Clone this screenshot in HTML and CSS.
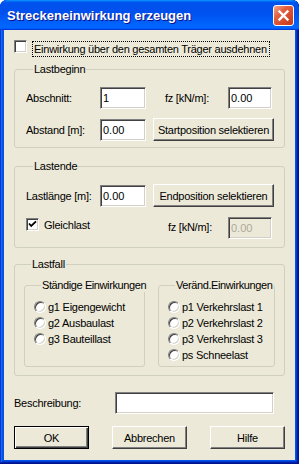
FILE: index.html
```html
<!DOCTYPE html>
<html lang="de">
<head>
    <meta charset="UTF-8">
    <title>Streckeneinwirkung erzeugen</title>
    <link rel="stylesheet" href="styles.css">
</head>
<body>
    <div class="window">
        <div class="titlebar">
            <span class="title">Streckeneinwirkung erzeugen</span>
            <span class="close">
                <svg width="19" height="19" viewBox="0 0 19 19">
                    <path d="M5.5 5.5 L13.5 13.5 M13.5 5.5 L5.5 13.5" stroke="#fff" stroke-width="2.4" stroke-linecap="square"/>
                </svg>
            </span>
        </div>

        <div class="client">
            <div class="check-row">
                <span class="check"></span>
                <span class="focus">Einwirkung über den gesamten Träger ausdehnen</span>
            </div>

            <fieldset class="group group-start">
                <legend>Lastbeginn</legend>
                <div class="row">
                    <span class="lbl">Abschnitt:</span>
                    <input class="edit" type="text" value="1">
                    <span class="lbl-fz">fz [kN/m]:</span>
                    <input class="edit edit-fz" type="text" value="0.00">
                </div>
                <div class="row row-btn">
                    <span class="lbl">Abstand [m]:</span>
                    <input class="edit" type="text" value="0.00">
                    <button class="btn btn-select" type="button">Startposition selektieren</button>
                </div>
            </fieldset>

            <fieldset class="group group-end">
                <legend>Lastende</legend>
                <div class="row row-first">
                    <span class="lbl">Lastlänge [m]:</span>
                    <input class="edit" type="text" value="0.00">
                    <button class="btn btn-select" type="button">Endposition selektieren</button>
                </div>
                <div class="row row-gleich">
                    <span class="gleich">
                        <span class="check">
                            <svg width="11" height="11" viewBox="0 0 11 11">
                                <path d="M2 4.5 L4.2 7 L9 2.3" stroke="#000" stroke-width="1.8" fill="none"/>
                            </svg>
                        </span>
                        <span>Gleichlast</span>
                    </span>
                    <span class="lbl-fz2">fz [kN/m]:</span>
                    <input class="edit edit-fz" type="text" value="0.00" disabled>
                </div>
            </fieldset>

            <fieldset class="group group-case">
                <legend>Lastfall</legend>
                <div class="cases">
                    <fieldset class="group sub sub-left">
                        <legend>Ständige Einwirkungen</legend>
                        <div class="radio"><span class="dot"></span>g1 Eigengewicht</div>
                        <div class="radio"><span class="dot"></span>g2 Ausbaulast</div>
                        <div class="radio"><span class="dot"></span>g3 Bauteillast</div>
                    </fieldset>
                    <fieldset class="group sub sub-right">
                        <legend>Veränd.Einwirkungen</legend>
                        <div class="radio"><span class="dot"></span>p1 Verkehrslast 1</div>
                        <div class="radio"><span class="dot"></span>p2 Verkehrslast 2</div>
                        <div class="radio"><span class="dot"></span>p3 Verkehrslast 3</div>
                        <div class="radio"><span class="dot"></span>ps Schneelast</div>
                    </fieldset>
                </div>
            </fieldset>

            <div class="desc-row">
                <span class="lbl-desc">Beschreibung:</span>
                <input class="edit edit-desc" type="text" value="">
            </div>

            <div class="button-row">
                <button class="btn btn-default" type="button">OK</button>
                <button class="btn" type="button">Abbrechen</button>
                <button class="btn" type="button">Hilfe</button>
            </div>
        </div>
    </div>
</body>
</html>
```

FILE: styles.css
```css
* {
    box-sizing: border-box;
}
body {
    margin: 0;
    background-color: #ffffff;
    font-family: "Liberation Sans", Arial, sans-serif;
    font-size: 11px;
    letter-spacing: -0.25px;
    color: #000;
}
.window {
    width: 299px;
    height: 464px;
    display: flex;
    flex-direction: column;
    background-color: #0055e5;
    border-radius: 7px 7px 0 0;
    overflow: hidden;
    box-shadow: inset -1px -1px #00138c, inset 1px 1px #0831d9, inset -2px -2px #001ea0, inset 2px 2px #166aee, inset -3px -3px #003bda, inset 3px 3px #0855dd;
}
.titlebar {
    height: 30px;
    flex: none;
    display: flex;
    justify-content: space-between;
    align-items: flex-start;
    padding: 0 5px 0 7px;
    background: linear-gradient(180deg, #0997ff, #0053ee 8%, #0050ee 40%, #0066ff 88%, #0066ff 93%, #005bff 95%, #003dd7 96%, #003dd7);
    border-radius: 7px 7px 0 0;
}
.title {
    margin-top: 8px;
    font-weight: bold;
    font-size: 13px;
    line-height: 16px;
    letter-spacing: 0;
    color: #fff;
    text-shadow: 1px 1px #0f1089;
}
.close {
    margin-top: 5px;
    width: 21px;
    height: 21px;
    border: 1px solid #fff;
    border-radius: 3px;
    background: linear-gradient(135deg, #f4a88f 0, #e2603f 35%, #d5482a 70%, #c23a1c 100%);
    display: flex;
}
.client {
    flex: 1;
    margin: 0 4px 4px;
    background-color: #ece9d8;
    padding: 10px 10px 0;
}

/* checkbox line at the top */
.check-row {
    display: flex;
    align-items: flex-start;
    height: 17px;
}
.check {
    width: 13px;
    height: 13px;
    flex: none;
    background-color: #fff;
    border: 1px solid;
    border-color: #808080 #fff #fff #808080;
    box-shadow: inset 1px 1px #404040, inset -1px -1px #d4d0c8;
    display: flex;
}
.focus {
    margin: 1px 0 0 5px;
    height: 16px;
    line-height: 14px;
    padding: 0 2px 0 1px;
    border: 1px dotted #000;
}

/* group boxes */
.group {
    margin: 0;
    padding: 0;
    min-width: 0;
    border: 1px solid #d0d0bf;
    border-radius: 3px;
}
.group legend {
    margin-left: 7px;
    padding: 0 1px;
    line-height: 13px;
    white-space: nowrap;
}
.group-start {
    margin-top: 6px;
    padding: 11px 0 6px 11px;
}
.group-end {
    margin-top: 12px;
    padding: 11px 0 8px 11px;
}
.group-case {
    margin-top: 10px;
    padding: 8px 0 8px 9px;
}
.row {
    display: flex;
    align-items: center;
    height: 22px;
}
.row-btn {
    margin-top: 9px;
    height: 23px;
}
.row-first {
    height: 23px;
}
.row-gleich {
    margin-top: 10px;
    align-items: flex-start;
}
.lbl {
    width: 74px;
    flex: none;
}
.lbl-fz {
    width: 82px;
    padding-left: 19px;
    flex: none;
}
.gleich {
    width: 142px;
    margin-top: 1px;
    display: flex;
    align-items: center;
    gap: 5px;
    flex: none;
}
.lbl-fz2 {
    width: 60px;
    margin-top: 4px;
    flex: none;
}
.edit {
    width: 46px;
    height: 22px;
    flex: none;
    margin: 0;
    padding: 0 2px;
    font-family: "Liberation Sans", Arial, sans-serif;
    font-size: 11px;
    color: #000;
    background-color: #fff;
    border: 1px solid;
    border-color: #808080 #fff #fff #808080;
    box-shadow: inset 1px 1px #404040, inset -1px -1px #d4d0c8;
    outline: none;
}
.edit-fz {
    width: 44px;
}
.edit:disabled {
    background-color: #ece9d8;
    color: #aca899;
}
.btn {
    width: 75px;
    height: 23px;
    margin: 0;
    padding: 0;
    font-family: "Liberation Sans", Arial, sans-serif;
    font-size: 11px;
    letter-spacing: -0.25px;
    color: #000;
    background-color: #ece9d8;
    border: 1px solid;
    border-color: #fff #404040 #404040 #fff;
    box-shadow: inset -1px -1px #808080;
    border-radius: 0;
}
.btn-select {
    width: 121px;
    margin-left: 7px;
}
.btn-default {
    border: 1px solid #000;
    box-shadow: inset 1px 1px #fff, inset -1px -1px #404040, inset -2px -2px #808080;
}

/* Lastfall */
.cases {
    display: flex;
    gap: 13px;
}
.sub {
    padding: 7px 0 3px 9px;
}
.sub legend {
    letter-spacing: -0.4px;
}
.sub-left {
    width: 121px;
}
.sub-right {
    width: 117px;
}
.radio {
    display: flex;
    align-items: center;
    gap: 2px;
    height: 16px;
    white-space: nowrap;
}
.dot {
    width: 12px;
    height: 12px;
    flex: none;
    border-radius: 50%;
    background-color: #fff;
    border: 1px solid;
    border-color: #808080 #fff #fff #808080;
    box-shadow: inset 1px 1px #404040, inset -1px -1px #d4d0c8;
}

/* bottom */
.desc-row {
    margin-top: 16px;
    display: flex;
    align-items: center;
}
.lbl-desc {
    width: 101px;
}
.edit-desc {
    width: 159px;
}
.button-row {
    margin-top: 12px;
    display: flex;
    justify-content: space-between;
}
```
